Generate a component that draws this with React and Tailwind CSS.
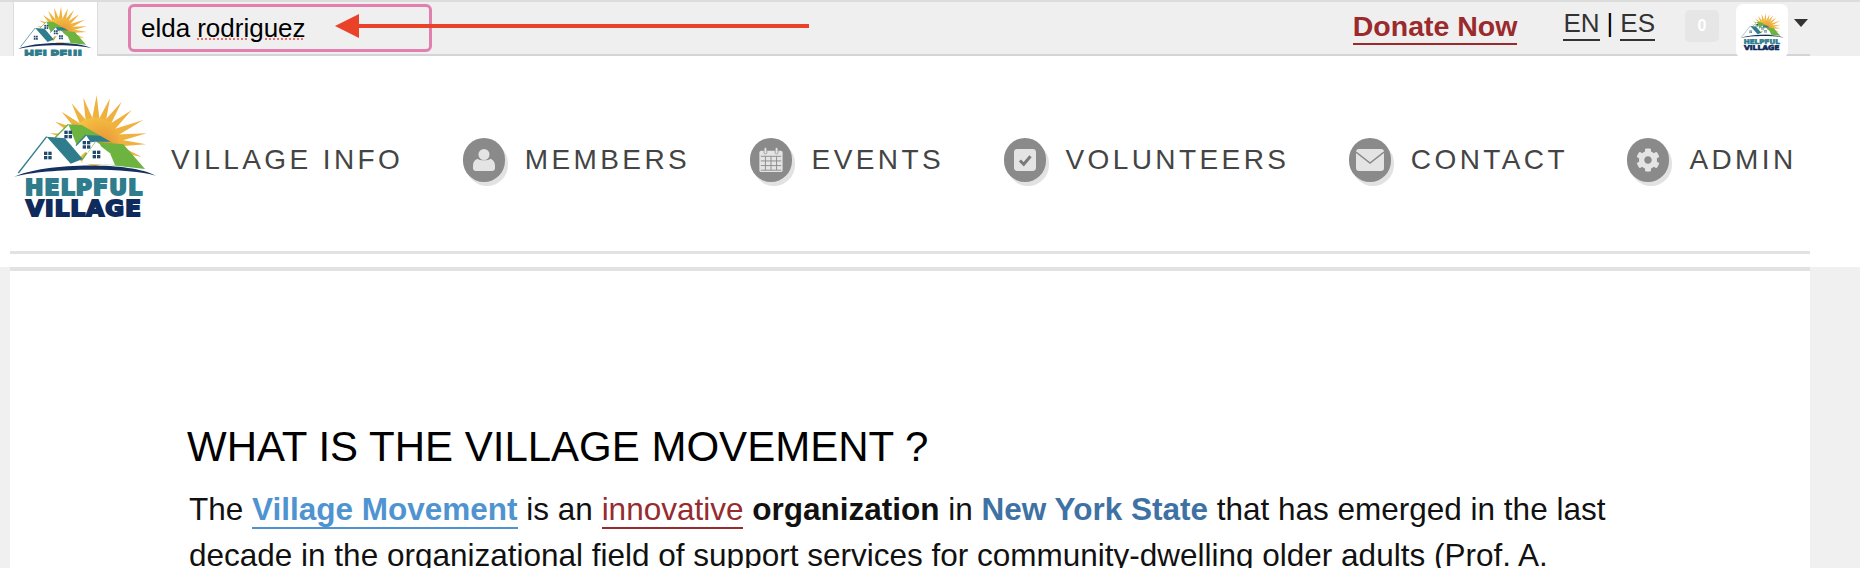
import { FaCog } from "react-icons/fa";

const rayTips = [
  [150, 145], [165, 110], [185, 80], [215, 55], [250, 38], [290, 30], [330, 40], [365, 50],
  [395, 75], [430, 105], [440, 145], [438, 178], [425, 215],
];

function rayPoints(tip) {
  const cx = 285;
  const cy = 170;
  const dx = tip[0] - cx;
  const dy = tip[1] - cy;
  const len = Math.hypot(dx, dy);
  const nx = (-dy / len) * 11;
  const ny = (dx / len) * 11;
  const bx = cx + (dx / len) * 68;
  const by = cy + (dy / len) * 68;
  return `${tip[0]},${tip[1]} ${bx + nx},${by + ny} ${bx - nx},${by - ny}`;
}

function Window({ x, y }) {
  return (
    <g fill="#1f4a6e">
      <rect x={x} y={y} width="10" height="10" />
      <rect x={x + 13} y={y} width="10" height="10" />
      <rect x={x} y={y + 13} width="10" height="10" />
      <rect x={x + 13} y={y + 13} width="10" height="10" />
    </g>
  );
}

function Logo({ id, className }) {
  return (
    <svg className={className} viewBox="0 0 510 420" fill="none">
      <defs>
        <radialGradient id={id} cx="0.65" cy="0.55" r="0.7">
          <stop offset="0" stopColor="#e8913a" />
          <stop offset="1" stopColor="#f6c842" />
        </radialGradient>
      </defs>
      {rayTips.map((tip) => (
        <polygon key={tip[0] + "-" + tip[1]} points={rayPoints(tip)} fill="#f0b23f" />
      ))}
      <circle cx="285" cy="170" r="72" fill={`url(#${id})`} />

      {/* back house */}
      <polygon points="205,118 165,160 240,215 290,170" fill="#ffffff" />
      <polygon points="205,118 245,120 340,175 262,150 230,180" fill="#6cb33f" />
      <polyline points="205,118 165,158" stroke="#6cb33f" strokeWidth="4" />

      {/* right house */}
      <polygon points="285,170 370,178 435,252 330,240 245,232" fill="#6cb33f" />
      <polygon points="285,170 245,228 250,236 345,240 330,205" fill="#ffffff" />
      <polyline points="285,170 245,226" stroke="#6cb33f" strokeWidth="4" />

      {/* middle house */}
      <polygon points="258,150 228,182 262,205 285,170 305,190 300,178" fill="#ffffff" />
      <polygon points="258,150 300,152 332,170 285,170 272,172" fill="#2f7c8c" />
      <polyline points="258,150 228,182" stroke="#2f7c8c" strokeWidth="4" />

      {/* left house */}
      <polygon points="140,155 55,262 230,240 200,190" fill="#ffffff" />
      <polygon points="140,155 195,160 248,222 212,236" fill="#2f7c8c" />
      <polyline points="140,155 55,264" stroke="#2f7c8c" strokeWidth="4" />

      <Window x={132} y={200} />
      <Window x={278} y={197} />
      <Window x={248} y={168} />
      <Window x={193} y={137} />

      <path d="M42 276 C120 236 380 226 468 272 C380 246 130 250 42 276 Z" fill="#14305f" />

      <text
        x="75"
        y="330"
        textLength="355"
        lengthAdjust="spacingAndGlyphs"
        fontFamily="'DejaVu Sans', sans-serif"
        fontWeight="700"
        fontSize="64"
        fill="#2f7c8c"
        stroke="#2f7c8c"
        strokeWidth="6"
      >
        HELPFUL
      </text>
      <text
        x="78"
        y="393"
        textLength="348"
        lengthAdjust="spacingAndGlyphs"
        fontFamily="'DejaVu Sans', sans-serif"
        fontWeight="700"
        fontSize="64"
        fill="#0f2a5c"
        stroke="#0f2a5c"
        strokeWidth="6"
      >
        VILLAGE
      </text>
    </svg>
  );
}

function UserIcon() {
  return (
    <svg className="w-[22px] h-[24px]" viewBox="0 0 24 26" fill="#e4e4e4">
      <circle cx="12" cy="7" r="6" />
      <path d="M5 11.5 C7 14 17 14 19 11.5 C22 12.5 24 15 24 19 V22 C24 24 22.5 25 21 25 H3 C1.5 25 0 24 0 22 V19 C0 15 2 12.500 5 11.500 Z" />
    </svg>
  );
}

function CalendarIcon() {
  return (
    <svg className="w-[26px] h-[26px]" viewBox="0 0 28 28" fill="none">
      <rect x="1.500" y="4" width="25" height="23" rx="2" fill="#e4e4e4" />
      <rect x="6.500" y="0.500" width="3" height="7" rx="1.500" fill="#e4e4e4" stroke="#8a8a8a" strokeWidth="0.800" />
      <rect x="18.500" y="0.500" width="3" height="7" rx="1.500" fill="#e4e4e4" stroke="#8a8a8a" strokeWidth="0.800" />
      <path
        d="M3 10 H25 M3 15 H25 M3 20 H25 M3 25 H25 M8 10 V25 M14 10 V25 M20 10 V25"
        stroke="#8a8a8a"
        strokeWidth="1"
      />
    </svg>
  );
}

function CheckIcon() {
  return (
    <svg className="w-[22px] h-[24px]" viewBox="0 0 26 26">
      <rect width="26" height="26" rx="4" fill="#e4e4e4" />
      <path d="M7 13.500 L11.500 18 L19.500 8.500" fill="none" stroke="#7a7a7a" strokeWidth="3.500" />
    </svg>
  );
}

function MailIcon() {
  return (
    <svg className="w-[28px] h-[22px]" viewBox="0 0 28 22">
      <rect width="28" height="22" rx="3" fill="#e4e4e4" />
      <path d="M0 3 L14 14 L28 3" fill="none" stroke="#8a8a8a" strokeWidth="1.500" />
    </svg>
  );
}

const navItems = [
  { label: "MEMBERS", icon: <UserIcon /> },
  { label: "EVENTS", icon: <CalendarIcon /> },
  { label: "VOLUNTEERS", icon: <CheckIcon /> },
  { label: "CONTACT", icon: <MailIcon /> },
  { label: "ADMIN", icon: <FaCog className="text-[#e4e4e4] text-[24px]" /> },
];

export default function App() {
  return (
    <div className="relative h-[568px] w-[1860px] overflow-hidden bg-[#f0f0f0] font-['Liberation_Sans',Arial,sans-serif]">
      {/* Top bar */}
      <div className="flex h-[56px] border-t-2 border-[#dcdcdc] bg-[#efefef] pl-[13px]">
        <div className="h-[54px] w-[85px] overflow-hidden border-x border-[#dddddd] bg-white">
          <Logo id="sun-small" className="-ml-[3px] -mt-[1px] h-[73px] w-[88px] max-w-none" />
        </div>
        <div className="mr-[50px] flex flex-1 items-start border-b-2 border-[#d4d4d4] pl-[30px]">
          <div className="mt-[2px] flex h-[48px] w-[304px] items-center rounded-[6px] border-[3px] border-[#e07fb0] pl-[10px] text-[26px] text-black">
            elda{" "}
            <span className="ml-[7px] underline decoration-[#e8706a] decoration-dotted decoration-2 underline-offset-2">
              rodriguez
            </span>
          </div>
          <a className="ml-auto mt-[8px] border-b-2 border-[#9b2a2c] text-[28.500px] leading-[33px] font-bold text-[#9b2a2c]">
            Donate Now
          </a>
          <div className="ml-[46px] mt-[5px] flex items-start text-[26px] leading-[32px] text-[#333333]">
            <span className="border-b-2 border-[#333333]">EN</span>
            <span className="mx-[7px] text-black">|</span>
            <span className="border-b-2 border-[#333333]">ES</span>
          </div>
          <div className="ml-[30px] mt-[8px] flex h-[32px] w-[34px] items-center justify-center rounded-[5px] bg-[#e6e6e6] text-[16px] font-bold text-white">
            0
          </div>
          <div className="relative ml-[17px] mt-[2px] flex h-[54px] w-[52px] shrink-0 items-center justify-center rounded-[7px] bg-white">
            <Logo id="sun-avatar" className="h-[45px] w-[54px] max-w-none" />
          </div>
          <div className="ml-[6px] mr-[2px] mt-[17px] h-0 w-0 border-x-[7px] border-t-[8px] border-x-transparent border-t-[#333333]" />
        </div>
      </div>

      {/* Annotation arrow over the search box */}
      <svg className="absolute left-[335px] top-[14px] h-[24px] w-[474px]" viewBox="0 0 474 24">
        <polygon points="0,12 24,0 24,24" fill="#ea4129" />
        <rect x="20" y="10" width="454" height="4" fill="#ea4129" />
      </svg>

      {/* Main nav */}
      <div className="bg-white">
        <div className="flex h-[195px] items-center pb-[3px] pt-[16px] text-[28px] tracking-[3.400px] text-[#444444]">
          <Logo id="sun-main" className="mt-[-10px] h-[140px] w-[170px] shrink-0" />
          <span className="ml-[1px]">VILLAGE INFO</span>
          {navItems.map((item) => (
            <div key={item.label} className="ml-[59.500px] flex items-center">
              <div className="relative flex h-[44px] w-[42px] items-center justify-center rounded-full bg-[#8a8a8a] shadow-[3px_4px_0_#e2e2e2]">
                {item.icon}
              </div>
              <span className="ml-[20px]">{item.label}</span>
            </div>
          ))}
        </div>
        <div className="ml-[10px] mr-[50px] h-[3px] bg-[#e2e2e2]" />
        <div className="h-[13px]" />
      </div>

      {/* Content card */}
      <div className="ml-[10px] mr-[50px] h-[400px] border-t-[4px] border-[#e2e2e2] bg-white pl-[177px] pt-[152px]">
        <h2 className="text-[42px] leading-[48px] text-black">WHAT IS THE VILLAGE MOVEMENT ?</h2>
        <p className="ml-[2px] mt-[15px] w-[1460px] text-[31.500px] leading-[46px] text-[#111111]">
          The{" "}
          <a className="border-b-2 border-[#4f94d0] font-bold text-[#4f94d0]">Village Movement</a>{" "}
          is an <a className="border-b-2 border-[#962b30] text-[#962b30]">innovative</a>{" "}
          <b>organization</b> in <a className="font-bold text-[#3f72a4]">New York State</a> that has emerged in the
          last decade in the organizational field of support services for community-dwelling older adults (Prof. A.
        </p>
      </div>
    </div>
  );
}
